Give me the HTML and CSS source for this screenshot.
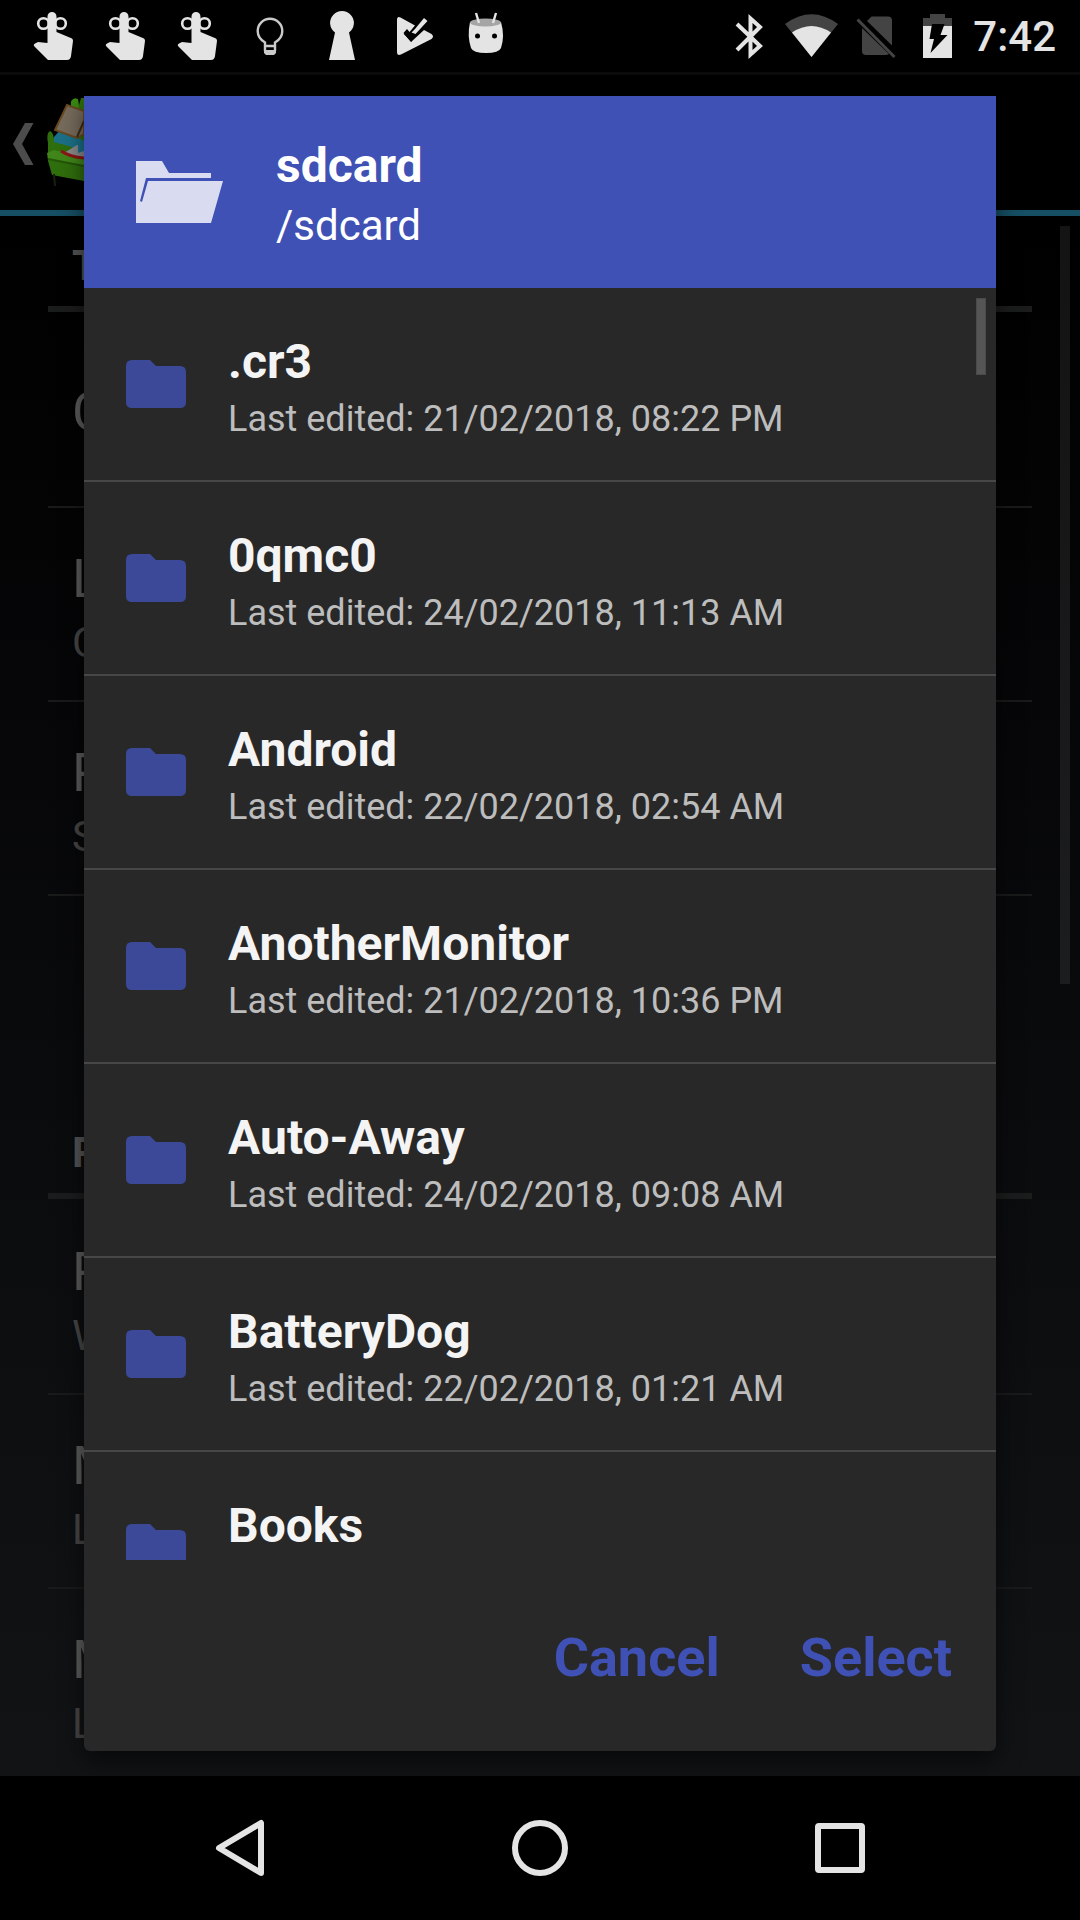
FILE: index.html
```html
<!DOCTYPE html>
<html lang="en">
<head>
<meta charset="utf-8">
<meta name="viewport" content="width=device-width, initial-scale=1">
<title>sdcard</title>
<link rel="stylesheet" href="styles.css">
</head>
<body>
<svg class="symbols" aria-hidden="true">
  <symbol id="reminder" viewBox="0 0 72 72">
    <path d="M29.500 43V16.500a4.500 4.500 0 0 1 9 0V32L54 38.500Q55.200 39.500 55 41L53 56Q52.500 60 49 60H30L16 46Q15 44.500 17 43.500L20 42Z"/>
    <g fill="none" stroke="#e4e4e4" stroke-width="2.600"><circle cx="25.500" cy="23.500" r="5.300"/><circle cx="42.500" cy="23.500" r="5.300"/></g>
  </symbol>
  <symbol id="folder" viewBox="0 0 60 48">
    <path d="M6 0H24L30 6H54Q60 6 60 12V42Q60 48 54 48H6Q0 48 0 42V6Q0 0 6 0Z"/>
  </symbol>
</svg>

<header class="status">
  <div class="notices">
    <svg class="notice" viewBox="0 0 72 72"><use href="#reminder"/></svg>
    <svg class="notice" viewBox="0 0 72 72"><use href="#reminder"/></svg>
    <svg class="notice" viewBox="0 0 72 72"><use href="#reminder"/></svg>
    <svg class="notice" viewBox="0 0 72 72"><path d="M31 51V42.500C26 39.500 23.700 35.500 23.700 31a12.300 12.300 0 0 1 24.600 0C48.300 35.500 46 39.500 41 42.500V51M31 46H41" fill="none" stroke="#c8cbc8" stroke-width="2.400"/><path d="M30 50H42V53L40 55H32L30 53Z" fill="#c8cbc8"/></svg>
    <svg class="notice" viewBox="0 0 72 72"><path d="M29 32.500a11.900 11.900 0 1 1 14 0L49 60H23Z"/></svg>
    <svg class="notice" viewBox="0 0 72 72"><path d="M19 20Q19 16 22.500 17.500L37 25.500 31.500 32 29 29 25.500 33 33 42 46 30 53.500 34Q56.500 36.500 53.500 39L23 54.500Q19 56 19 52Z"/><path d="M27 33l6 6.500 15-20" fill="none" stroke="#000" stroke-width="3"/><path d="M33.500 32.500L37 29 46 18l3.500 3L37.500 34Z"/></svg>
    <svg class="notice" viewBox="0 0 72 72"><path d="M20 22Q36 27 51 22Q55 36 51 48Q49 53 36 53T21 48Q17 36 20 22Z"/><ellipse cx="35.500" cy="22.500" rx="15.500" ry="4" fill="#a5a5a5"/><path d="M26 13l3 10M46 13l-3 10" stroke="#e4e4e4" stroke-width="2.400"/><circle cx="27.500" cy="36" r="2.500" fill="#000"/><circle cx="44.500" cy="36" r="2.500" fill="#000"/></svg>
  </div>
  <div class="system">
    <svg class="signal" viewBox="719 0 62 72"><path d="M737 24L760 46 750.500 54.500V18.500L760 27 737 50" fill="none" stroke="#e4e4e4" stroke-width="4"/></svg>
    <svg class="signal" viewBox="781 0 62 72"><path d="M785 24Q811.500 4.500 838 24L811.500 57Z" fill="#444"/><path d="M792 32.500Q811.500 19.500 831 32.500L811.500 57Z"/></svg>
    <svg class="signal" viewBox="843 0 62 72"><g fill="#444"><path d="M862 28L889 54Q887 55 886 55H866Q862 55 862 51Z"/><path d="M867 21L871.500 16.500H888Q892 16.500 892 20.500V45.500Z"/></g><path d="M857.500 19.500L894.500 57" stroke="#444" stroke-width="3"/></svg>
    <svg class="signal" viewBox="905 0 62 72"><path d="M923 26V18H930V14H945V18H952V26Z" fill="#444"/><path d="M923 26H952V58H923Z"/><path d="M932 24H944.500L940.500 35H947.500L930.500 53 934 39H929.500Z" fill="#000"/></svg>
    <time class="clock">7:42</time>
  </div>
</header>

<main class="screen">
  <div class="settings">
    <div class="actionbar">
      <svg class="up" viewBox="0 0 84 135">
        <path d="M25 48H33.500L22 69 33.500 90H25L13 69Z" fill="#4c4c4c"/>
        <path d="M71 44V27Q73 22 78 24L79 30 81 23H84V106L52 100 48 86V68Q46 58 50 56 53 57 54 64L71 72Z" fill="#2f6e0c"/>
        <path d="M71 44V27Q73 22 78 24L79 40Z" fill="#3b8a12"/>
        <path d="M47 78L54 75 84 81V90L48 85Z" fill="#40861a"/>
        <path d="M48 84L84 91" stroke="#245509" stroke-width="2" fill="none"/>
        <path d="M54 70V62L61 54 84 66V82L74 80Z" fill="#1b7088"/>
        <path d="M54 67L72 72 72 78 55 75Z" fill="#2f6e0c"/>
        <path d="M64 78L77 70 84 71V83L76 82Z" fill="#8a8a8a"/>
        <path d="M78 70H84V76L78 78Z" fill="#1b7088"/>
        <path d="M61 76Q70 82 84 83" stroke="#8d1515" stroke-width="3" fill="none"/>
        <path d="M55 55L67 30 84 36V59L77 63Z" fill="#766b5c" stroke="#68481f" stroke-width="2"/>
        <path d="M77 62L84 46" stroke="#3d2c15" stroke-width="2"/>
        <path d="M54 99L55 111" stroke="#1a200f" stroke-width="2"/>
      </svg>
    </div>
    <h2 class="group">T</h2>
    <div class="pref pref-single"><p class="pref-name">C</p></div>
    <div class="pref"><p class="pref-name">L</p><p class="pref-note">C</p></div>
    <div class="pref"><p class="pref-name">P</p><p class="pref-note">S</p></div>
    <div class="pref pref-blank"></div>
    <h2 class="group">P</h2>
    <div class="pref"><p class="pref-name">P</p><p class="pref-note">W</p></div>
    <div class="pref"><p class="pref-name">M</p><p class="pref-note">L</p></div>
    <div class="pref"><p class="pref-name">M</p><p class="pref-note">L</p></div>
    <div class="page-thumb"></div>
  </div>

  <section class="dialog" role="dialog" aria-labelledby="place">
    <header class="place">
      <svg class="open-folder" viewBox="0 0 87 62" aria-hidden="true"><path d="M0 0H26L33 12H75V17H10L4 40 6 41 12 20H87L75 62H0Z"/></svg>
      <div>
        <h1 class="place-name" id="place">sdcard</h1>
        <p class="place-path">/sdcard</p>
      </div>
    </header>
    <div class="list-box">
      <ul class="list">
        <li class="item"><svg class="folder"><use href="#folder"/></svg><div><h3 class="name">.cr3</h3><p class="edited">Last edited: 21/02/2018, 08:22 PM</p></div></li>
        <li class="item"><svg class="folder"><use href="#folder"/></svg><div><h3 class="name">0qmc0</h3><p class="edited">Last edited: 24/02/2018, 11:13 AM</p></div></li>
        <li class="item"><svg class="folder"><use href="#folder"/></svg><div><h3 class="name">Android</h3><p class="edited">Last edited: 22/02/2018, 02:54 AM</p></div></li>
        <li class="item"><svg class="folder"><use href="#folder"/></svg><div><h3 class="name">AnotherMonitor</h3><p class="edited">Last edited: 21/02/2018, 10:36 PM</p></div></li>
        <li class="item"><svg class="folder"><use href="#folder"/></svg><div><h3 class="name">Auto-Away</h3><p class="edited">Last edited: 24/02/2018, 09:08 AM</p></div></li>
        <li class="item"><svg class="folder"><use href="#folder"/></svg><div><h3 class="name">BatteryDog</h3><p class="edited">Last edited: 22/02/2018, 01:21 AM</p></div></li>
        <li class="item"><svg class="folder"><use href="#folder"/></svg><div><h3 class="name">Books</h3></div></li>
      </ul>
      <div class="list-thumb"></div>
    </div>
    <footer class="actions">
      <button class="action" type="button">Cancel</button>
      <button class="action" type="button">Select</button>
    </footer>
  </section>
</main>

<nav class="navbar">
  <button class="key" type="button" aria-label="Back"><svg class="key-icon" viewBox="0 0 60 60"><path d="M51 5V55L9 30Z"/></svg></button>
  <button class="key" type="button" aria-label="Home"><svg class="key-icon" viewBox="0 0 60 60"><circle cx="30" cy="30" r="25"/></svg></button>
  <button class="key" type="button" aria-label="Recent apps"><svg class="key-icon" viewBox="0 0 60 60"><rect x="8" y="8" width="44" height="44" rx="1"/></svg></button>
</nav>
</body>
</html>
```
FILE: styles.css
```css
* {
  box-sizing: border-box;
}

body {
  margin: 0;
  height: 100vh;
  display: flex;
  flex-direction: column;
  background: #000;
  color: #f4f4f4;
  font-family: Roboto, "Liberation Sans", sans-serif;
}

h1, h2, h3, p, ul {
  margin: 0;
  padding: 0;
}

svg {
  display: block;
  flex: none;
}

.symbols {
  position: absolute;
  width: 0;
  height: 0;
}

/* Status bar */
.status {
  flex: none;
  display: flex;
  justify-content: space-between;
  height: 75px;
  padding: 0 24px 0 18px;
  border-bottom: 3px solid #0b0b0b;
  fill: #e4e4e4;
}

.notices,
.system {
  display: flex;
}

.notice {
  width: 72px;
  height: 72px;
}

.signal {
  width: 62px;
  height: 72px;
}

.clock {
  padding-left: 6px;
  color: #e4e4e4;
  font-size: 42px;
  font-weight: 500;
  line-height: 74px;
}

/* Settings page behind the dialog */
.screen {
  position: relative;
  flex: 1;
  min-height: 0;
  display: flex;
  flex-direction: column;
  background: linear-gradient(#000 0, #000 150px, #0a0b0d 60%, #111315);
}

.settings {
  position: absolute;
  inset: 0;
  overflow: hidden;
}

.actionbar {
  height: 141px;
  background: #000;
  border-bottom: 6px solid #164e63;
}

.up {
  width: 84px;
  height: 135px;
}

.group {
  height: 96px;
  margin: 0 48px;
  padding: 25px 24px 0;
  border-bottom: 6px solid #1b1c1c;
  color: #545454;
  font-size: 42px;
  line-height: 50px;
}

.pref {
  height: 194px;
  margin: 0 48px;
  padding: 36px 24px 0;
  border-bottom: 2px solid #191a1a;
}

.group + .pref {
  height: 196px;
  padding-top: 38px;
}

.group + .pref-single {
  padding-top: 65px;
}

.pref-name {
  color: #5c5c5c;
  font-size: 54px;
  line-height: 70px;
}

.pref-note {
  margin-top: 4px;
  color: #464646;
  font-size: 42px;
  line-height: 50px;
}

.pref + .pref-blank {
  height: 207px;
  border-bottom: 0;
}

.page-thumb {
  position: absolute;
  top: 151px;
  right: 10px;
  width: 10px;
  height: 758px;
  background: #ffffff14;
}

/* Dialog */
.dialog {
  position: relative;
  flex: 1;
  min-height: 0;
  display: flex;
  flex-direction: column;
  margin: 21px 84px 25px;
  border-radius: 0 0 6px 6px;
  background: #282828;
  box-shadow: 0 10px 24px #00000090;
}

.place {
  flex: none;
  display: flex;
  align-items: center;
  gap: 53px;
  height: 192px;
  padding-left: 52px;
  background: #3f51b5;
  color: #fff;
}

.open-folder {
  width: 87px;
  height: 62px;
  fill: #d9dcf0;
}

.place-name {
  padding-top: 8px;
  font-size: 48px;
  line-height: 60px;
}

.place-path {
  font-size: 42px;
  line-height: 60px;
}

.list-box {
  position: relative;
  flex: 1;
  min-height: 0;
}

.list {
  height: 100%;
  overflow: hidden;
  list-style: none;
}

.item {
  display: flex;
  gap: 42px;
  height: 194px;
  padding: 44px 42px 0;
  border-bottom: 2px solid #474747;
}

.folder {
  width: 60px;
  height: 48px;
  margin-top: 28px;
  fill: #3c4999;
}

.name {
  font-size: 48px;
  line-height: 60px;
}

.edited {
  color: #bdbdbd;
  font-size: 36px;
  line-height: 54px;
}

.list-thumb {
  position: absolute;
  top: 10px;
  right: 10px;
  width: 10px;
  height: 77px;
  border: 1px solid #4a4a4a;
  background: #555;
}

.actions {
  flex: none;
  display: flex;
  justify-content: flex-end;
  align-items: flex-start;
  gap: 32px;
  height: 191px;
  padding: 50px 20px 0;
}

.action {
  padding: 0 24px;
  border: 0;
  background: none;
  color: #3f51b5;
  font: bold 54px/96px Roboto, "Liberation Sans", sans-serif;
}

/* Navigation keys */
.navbar {
  flex: none;
  display: flex;
  justify-content: center;
  height: 144px;
  background: #000;
}

.key {
  display: grid;
  place-items: center;
  width: 300px;
  padding: 0;
  border: 0;
  background: none;
}

.key-icon {
  width: 60px;
  height: 60px;
  fill: none;
  stroke: #e4e4e4;
  stroke-width: 6;
  stroke-linejoin: round;
}
```
